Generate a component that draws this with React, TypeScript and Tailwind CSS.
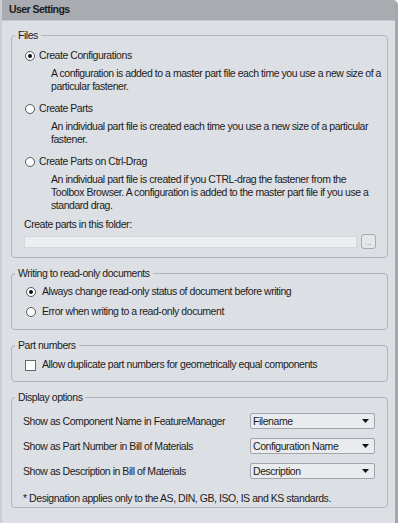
import React, { useState } from 'react';

const font = { fontFamily: '"Liberation Sans", Arial, sans-serif' };

const Radio: React.FC<{ checked: boolean; onClick: () => void }> = ({ checked, onClick }) => (
  <span
    onClick={onClick}
    className="flex h-[10px] w-[10px] shrink-0 items-center justify-center rounded-full border border-[#55585e] bg-white"
  >
    {checked && <span className="h-[4px] w-[4px] rounded-full bg-[#111]" />}
  </span>
);

const Group: React.FC<{ title: string; className?: string; children: React.ReactNode }> = ({ title, className, children }) => (
  <fieldset className={`ml-[9px] w-[377px] min-w-0 rounded-[4px] border border-[#afb3c0] pl-[12px] pr-[11px] ${className || ''}`}>
    <legend className="ml-[-9px] px-[3px] leading-[14px]">{title}</legend>
    {children}
  </fieldset>
);

const Select: React.FC<{ value: string }> = ({ value }) => (
  <div className="flex h-[16px] w-[125px] items-center justify-between rounded-[2px] border border-[#a2a5ac] bg-[#e9ebee] pl-[2px] pr-[5px] leading-none">
    <span>{value}</span>
    <svg width="7" height="4" viewBox="0 0 7 4">
      <path d="M0 0h7L3.5 4z" fill="#111" />
    </svg>
  </div>
);

export default function App() {
  const [files, setFiles] = useState(0);
  const [ro, setRo] = useState(0);
  const [dup, setDup] = useState(false);

  const fileOpts = [
    {
      label: 'Create Configurations',
      lines: ['A configuration is added to a master part file each time you use a new size of a', 'particular fastener.'],
    },
    {
      label: 'Create Parts',
      lines: ['An individual part file is created each time you use a new size of a particular', 'fastener.'],
    },
    {
      label: 'Create Parts on Ctrl-Drag',
      lines: [
        'An individual part file is created if you CTRL-drag the fastener from the',
        'Toolbox Browser. A configuration is added to the master part file if you use a',
        'standard drag.',
      ],
    },
  ];

  const rows = [
    ['Show as Component Name in FeatureManager', 'Filename'],
    ['Show as Part Number in Bill of Materials', 'Configuration Name'],
    ['Show as Description in Bill of Materials', 'Description'],
  ];

  return (
    <div
      style={font}
      className="flex h-[523px] w-[398px] flex-col overflow-hidden rounded-tr-[5px] border-l-2 border-r-[3px] border-l-[#cbced4] border-r-[#a4a7ae] bg-[#dcdfe4] text-[10.5px] tracking-[-0.45px] text-[#1c1c1c]"
    >
      <div className="flex h-[21px] shrink-0 items-center border-b border-[#c4c7ce] bg-[#a9abb0] pl-[7px] text-[10.5px] font-bold tracking-[-0.55px]">
        User Settings
      </div>

      <Group title="Files" className="mt-[7px] pb-[8px]">
        {fileOpts.map((o, i) => (
          <div key={o.label} className={i === 0 ? 'mt-[6px]' : 'mt-[8px]'}>
            <div className="flex h-[16px] items-center gap-[4px] pl-[1px]">
              <Radio checked={files === i} onClick={() => setFiles(i)} />
              <span>{o.label}</span>
            </div>
            <div className="mt-[3px] pl-[27px] leading-[13px]">
              {o.lines.map((l) => (
                <div key={l} className="whitespace-nowrap">{l}</div>
              ))}
            </div>
          </div>
        ))}
        <div className="mt-[5px] leading-[14px]">Create parts in this folder:</div>
        <div className="mt-[3px] flex items-center gap-[4px]">
          <div className="h-[12px] w-[333px] border border-[#d3d6db] bg-[#eceef1]" />
          <div className="flex h-[15px] w-[15px] items-end justify-center rounded-[3px] border border-[#a7aab1] bg-[#e4e6e9] pb-[2px] text-[7px] leading-none tracking-normal text-[#888]">
            ...
          </div>
        </div>
      </Group>

      <Group title="Writing to read-only documents" className="mt-[8px] pb-[9px]">
        {['Always change read-only status of document before writing', 'Error when writing to a read-only document'].map(
          (l, i) => (
            <div key={l} className="mt-[4px] flex h-[16px] items-center gap-[6px] pl-[2px]">
              <Radio checked={ro === i} onClick={() => setRo(i)} />
              <span>{l}</span>
            </div>
          ),
        )}
      </Group>

      <Group title="Part numbers" className="mt-[8px] pb-[8px]">
        <div className="mt-[5px] flex h-[16px] items-center gap-[6px] pl-[1px]">
          <span
            onClick={() => setDup(!dup)}
            className="flex h-[11px] w-[11px] shrink-0 items-center justify-center border border-[#66686e] bg-white text-[9px] leading-none"
          >
            {dup ? '✓' : ''}
          </span>
          <span>Allow duplicate part numbers for geometrically equal components</span>
        </div>
      </Group>

      <Group title="Display options" className="mt-[8px] pb-[2px]">
        {rows.map(([l, v]) => (
          <div key={l} className="mt-[9px] flex h-[16px] items-center justify-between pr-[1px]">
            <span className="ml-[-1px] pt-[2px]">{l}</span>
            <Select value={v} />
          </div>
        ))}
        <div className="ml-[-1px] mt-[12px] leading-[14px]">* Designation applies only to the AS, DIN, GB, ISO, IS and KS standards.</div>
      </Group>
    </div>
  );
}
